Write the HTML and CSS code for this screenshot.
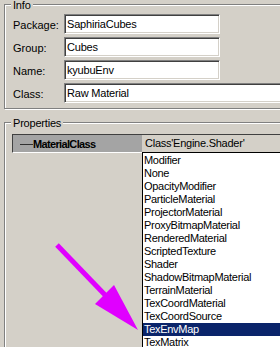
FILE: index.html
```html
<!DOCTYPE html>
<html>
<head>
<meta charset="utf-8">
<link rel="stylesheet" href="styles.css">
</head>
<body>
<div class="win">
  <div class="group info">
    <span class="legend">Info</span>
    <div class="fields">
      <div class="row"><span class="label">Package:</span><div class="input">SaphiriaCubes</div></div>
      <div class="row"><span class="label">Group:</span><div class="input">Cubes</div></div>
      <div class="row"><span class="label">Name:</span><div class="input">kyubuEnv</div></div>
      <div class="row"><span class="label">Class:</span><div class="input wide">Raw Material</div></div>
    </div>
  </div>
  <div class="group props">
    <span class="legend">Properties</span>
    <div class="prop-row">
      <div class="prop-name"><span class="dash"></span><span class="pname">MaterialClass</span></div>
      <div class="prop-value">Class'Engine.Shader'</div>
    </div>
    <ul class="list">
      <li>Modifier</li>
      <li>None</li>
      <li>OpacityModifier</li>
      <li>ParticleMaterial</li>
      <li>ProjectorMaterial</li>
      <li>ProxyBitmapMaterial</li>
      <li>RenderedMaterial</li>
      <li>ScriptedTexture</li>
      <li>Shader</li>
      <li>ShadowBitmapMaterial</li>
      <li>TerrainMaterial</li>
      <li>TexCoordMaterial</li>
      <li>TexCoordSource</li>
      <li class="sel">TexEnvMap</li>
      <li>TexMatrix</li>
    </ul>
  </div>
  <svg class="arrow" width="280" height="347" viewBox="0 0 280 347">
    <line x1="57" y1="245" x2="107" y2="297" stroke="#e000ff" stroke-width="5"/>
    <polygon points="95,304 114,285 138,330" fill="#e000ff"/>
  </svg>
</div>
</body>
</html>
```
FILE: styles.css
```css
html, body {
  margin: 0;
  padding: 0;
}
body {
  background: #d4d0c8;
  font-family: "Liberation Sans", Arial, sans-serif;
  font-size: 11px;
  line-height: 12px;
  color: #000;
  width: 280px;
  height: 347px;
  overflow: hidden;
}
.win {
  position: relative;
  width: 280px;
  height: 347px;
  overflow: hidden;
}
.group {
  position: relative;
  border: 1px solid #808080;
  box-shadow: inset 1px 1px #fff, 1px 1px #fff;
  margin-left: 4px;
  margin-right: -60px;
}
.legend {
  position: absolute;
  top: -6px;
  left: 6px;
  padding: 0 2px;
  background: #d4d0c8;
  letter-spacing: -0.2px;
}
.info {
  margin-top: 4px;
  padding: 9px 0 5px 8px;
}
.fields {
  display: flex;
  flex-direction: column;
  gap: 3px;
}
.row {
  display: flex;
  align-items: center;
  height: 20px;
}
.label {
  width: 51px;
  flex: none;
  padding-top: 1px;
}
.input {
  box-sizing: border-box;
  width: 156px;
  height: 20px;
  background: #fff;
  border: 1px solid;
  border-color: #808080 #fff #fff #808080;
  box-shadow: inset 1px 1px #404040, inset -1px -1px #d4d0c8;
  padding: 3px 0 0 2px;
  letter-spacing: -0.2px;
}
.input.wide {
  flex: 1;
  width: auto;
}
.props {
  margin-top: 13px;
  height: 400px;
  padding: 11px 0 0 7px;
}
.prop-row {
  display: flex;
  height: 19px;
}
.prop-name {
  box-sizing: border-box;
  width: 130px;
  height: 19px;
  background: #a4a4a4;
  border-top: 1px solid #404040;
  border-left: 1px solid #404040;
  border-bottom: 1px solid #fff;
  display: flex;
  align-items: center;
  padding: 1px 0 0 7px;
}
.dash {
  width: 13px;
  height: 1px;
  background: #303030;
  flex: none;
}
.pname {
  font-weight: bold;
  letter-spacing: -0.65px;
}
.prop-value {
  flex: 1;
  height: 18px;
  box-sizing: border-box;
  background: #d4d0c8;
  border-top: 1px solid #404040;
  padding: 2px 0 0 3px;
  letter-spacing: -0.25px;
}
.list {
  position: absolute;
  top: 29px;
  left: 137px;
  width: 220px;
  margin: 0;
  padding: 1px 0 0 0;
  list-style: none;
  background: #fff;
  border: 1px solid #000;
}
.list li {
  height: 13px;
  line-height: 13px;
  padding-left: 1px;
  letter-spacing: -0.3px;
  white-space: nowrap;
}
.list li.sel {
  background: #0a246a;
  color: #fff;
}
.arrow {
  position: absolute;
  top: 0;
  left: 0;
  pointer-events: none;
}
```
